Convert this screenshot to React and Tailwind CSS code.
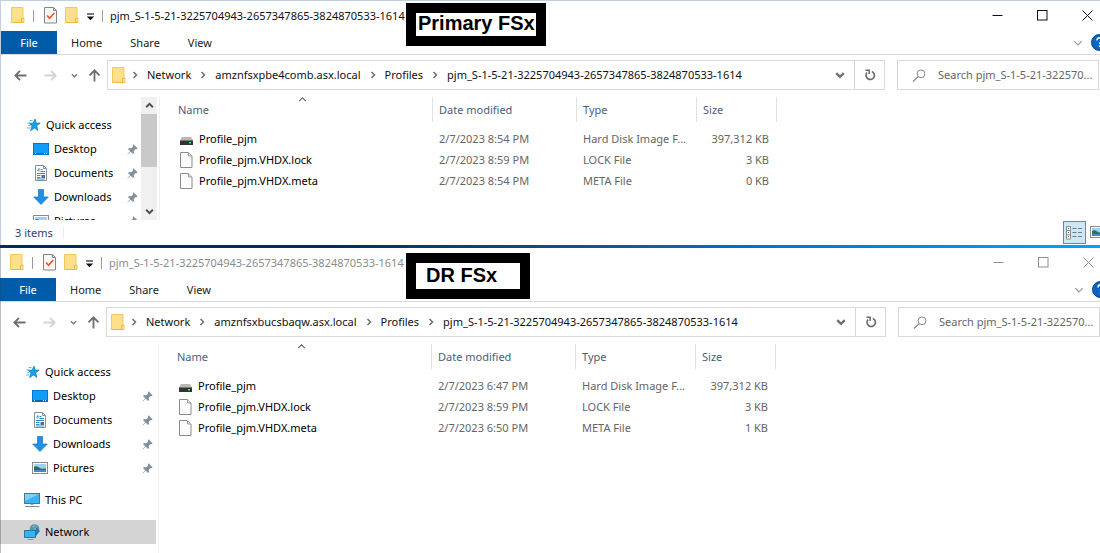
import React from "react";

const FolderIcon = () => (
  <svg width="14" height="17" viewBox="0 0 14 17" className="shrink-0" aria-hidden="true">
    <path d="M0.500 0.500h11.500v10.500h1v4.500h-12.500z" fill="#ffe08a" stroke="#f5c85c" />
    <path d="M10.500 15.500v-4h2M0.500 15.500h12.500" fill="none" stroke="#f0b945" />
  </svg>
);

const CheckDocIcon = () => (
  <svg width="13" height="17" viewBox="0 0 13 17" className="shrink-0" aria-hidden="true">
    <path d="M0.500 0.500h9l3 3v12.500h-12z" fill="#f6f6f6" stroke="#858585" />
    <path d="M9.500 0.500v3h3" fill="none" stroke="#858585" />
    <path d="M3 8.500l2.500 2.800l4.800-5.300" fill="none" stroke="#f0582c" strokeWidth="1.700" />
  </svg>
);

const FileIcon = () => (
  <svg width="13" height="16" viewBox="0 0 13 16" className="block shrink-0" aria-hidden="true">
    <path d="M0.500 0.500h8l3.500 3.500v11.500h-11.500z" fill="#fcfcfc" stroke="#8c8c8c" />
    <path d="M8.500 0.500v3.500h3.500" fill="#e6e6e6" stroke="#9a9a9a" />
  </svg>
);

const DiskIcon = () => (
  <svg width="13" height="16" viewBox="0 0 13 16" className="block shrink-0" aria-hidden="true">
    <path d="M2 6h9l2 3.500H0z" fill="#b9b9b9" />
    <rect x="0" y="9" width="13" height="5" fill="#333" />
    <rect x="0" y="9" width="13" height="1" fill="#777" />
    <rect x="9" y="11" width="2" height="1.500" fill="#3ee85c" />
  </svg>
);

const StarIcon = () => (
  <svg width="16" height="16" viewBox="0 0 16 16" className="shrink-0" aria-hidden="true">
    <path d="M10 2l1.200 4.100h4l-3.500 2.700l1.200 4.600l-3.400-2.400l-3.900 2.600l1.500-4.700l-3-2.600l4-0.200z" fill="#18a0e0" stroke="#1288cb" strokeWidth="0.800" />
    <path d="M4.500 3.500h3M2.500 6h2.500M3.500 8.500h2M2 11h3.500" stroke="#5cbdec" strokeWidth="1" />
  </svg>
);

const DesktopIcon = () => (
  <svg width="16" height="16" viewBox="0 0 16 16" className="shrink-0" aria-hidden="true">
    <rect x="0.500" y="2.500" width="15" height="11" fill="#109cf8" stroke="#0874c4" />
    <path d="M1 12.500h14" stroke="#0561a8" />
    <path d="M2 12.500h1M11 12.500h1M13 12.500h1" stroke="#fff" />
  </svg>
);

const DocumentsIcon = () => (
  <svg width="16" height="16" viewBox="0 0 16 16" className="shrink-0" aria-hidden="true">
    <path d="M2.500 0.500h8l3 3v12h-11z" fill="#fff" stroke="#85909a" />
    <path d="M10.500 0.500v3h3" fill="none" stroke="#85909a" />
    <path d="M4.500 5.500l1.500-2v3M7.500 4.500h2M7.500 6.500h4.500M4 8.500h8M4 10.500h3.500M4 12.500h3.500M4 14h8" fill="none" stroke="#2a8fd0" strokeWidth="1" />
    <rect x="8.500" y="10" width="3.500" height="3" fill="#5b6d7c" />
  </svg>
);

const DownloadsIcon = () => (
  <svg width="16" height="16" viewBox="0 0 16 16" className="shrink-0" aria-hidden="true">
    <path d="M5.500 0.500h5v7.500h4.800L8 15.500L0.700 8h4.800z" fill="#2090e2" stroke="#1673be" strokeWidth="0.700" />
  </svg>
);

const PicturesIcon = () => (
  <svg width="16" height="16" viewBox="0 0 16 16" className="shrink-0" aria-hidden="true">
    <rect x="0.500" y="2.500" width="15" height="11" fill="#fff" stroke="#8b8b8b" />
    <rect x="2" y="4" width="12" height="8" fill="#9cd0f5" />
    <path d="M2 7c3-2 5 1 7 1.500s3 0 5 0V12H2z" fill="#37685e" />
    <path d="M2 10h12V12H2z" fill="#3f8ac8" />
  </svg>
);

const PcIcon = () => (
  <svg width="16" height="16" viewBox="0 0 16 16" className="shrink-0" aria-hidden="true">
    <rect x="0.500" y="1.500" width="15" height="10" fill="#35b4f8" stroke="#58717f" />
    <path d="M1 2h14L1 9z" fill="#7bd0fc" />
    <path d="M6.500 12h3v1h-3z" fill="#9aa6ae" />
    <path d="M1 14.500h14.500" stroke="#7d8d98" />
  </svg>
);

const NetworkIcon = () => (
  <svg width="16" height="16" viewBox="0 0 16 16" className="shrink-0" aria-hidden="true">
    <circle cx="10.500" cy="5" r="4.800" fill="#5795ae" />
    <path d="M8.500 2.500c1.500 0.500 2 0 2.500-1M10.500 5c1-1 2-1 2.500-2.500" fill="none" stroke="#a5cfdc" />
    <path d="M12 3l4 4l-4 5z" fill="#2f7aa0" />
    <path d="M0.500 6.500h11v7h-11z" fill="#30b4f5" stroke="#39708c" />
    <path d="M3.500 15.500h6" stroke="#7d9aa8" />
  </svg>
);

const PinIcon = () => (
  <svg width="11" height="11" viewBox="0 0 11 11" className="ml-auto shrink-0" aria-hidden="true">
    <path d="M6.500 0.300l4.200 4.200l-1.200 0.700l-0.900-0.200l-1.800 1.900l0.200 2.100l-1 1l-2.200-2.200l-3.300 2.900l-0.200-0.200l2.900-3.300L1 5l1-1l2.100 0.200l1.900-1.800l-0.200-0.900z" fill="#84919b" />
  </svg>
);

const Chevron = ({ dir = "down", size = 8, color = "#6e6e6e", weight = 1.5 }) => {
  const d = { down: "M1 2.500L4 5.500L7 2.500", up: "M1 5.500L4 2.500L7 5.500", right: "M2.500 1L5.500 4L2.500 7" }[dir];
  return (
    <svg width={size} height={size} viewBox="0 0 8 8" className="shrink-0" aria-hidden="true">
      <path d={d} fill="none" stroke={color} strokeWidth={weight} />
    </svg>
  );
};

const ArrowIcon = ({ dir, color }) => (
  <svg width="13" height="13" viewBox="0 0 13 13" className="shrink-0" aria-hidden="true">
    <path
      d={{
        left: "M12.500 6.500H1.500M6 1.800L1.300 6.500L6 11.200",
        right: "M0.500 6.500H11.500M7 1.800L11.700 6.500L7 11.200",
        up: "M6.500 12.500V1.500M1.500 6.300L6.500 1.300L11.500 6.300",
      }[dir]}
      fill="none"
      stroke={color}
      strokeWidth="1.800"
    />
  </svg>
);

const RefreshIcon = () => (
  <svg width="12" height="12" viewBox="0 0 12 12" aria-hidden="true">
    <path d="M7.800 2.400A4.200 4.200 0 1 1 3 3.600" fill="none" stroke="#6a6a6a" strokeWidth="1.600" />
    <path d="M1.500 1.300H5.200V5" fill="none" stroke="#6a6a6a" strokeWidth="1.500" />
  </svg>
);

const SearchIcon = () => (
  <svg width="14" height="13" viewBox="0 0 14 13" className="shrink-0" aria-hidden="true">
    <circle cx="9" cy="4.800" r="3.900" fill="none" stroke="#8b8288" />
    <path d="M6.200 7.600L1 12.500" stroke="#8b8288" strokeWidth="1.200" />
  </svg>
);

const HelpIcon = () => (
  <svg width="17" height="17" viewBox="0 0 17 17" className="shrink-0" aria-hidden="true">
    <circle cx="8.500" cy="8.500" r="8" fill="#0a64c4" stroke="#08407f" />
    <path d="M6 6.500c0-3.500 5.200-3.500 5.200-0.500c0 2-2.600 1.800-2.600 4M8.600 11.500v1.600" fill="none" stroke="#fff" strokeWidth="1.500" />
  </svg>
);

const DetailsViewIcon = () => (
  <svg width="17" height="14" viewBox="0 0 17 14" aria-hidden="true">
    <path d="M0.500 0.500h4v12.500h-4zM0.500 4.500h4M0.500 8.800h4" fill="#fff" stroke="#8d8d8d" />
    <rect x="2" y="2" width="1" height="1" fill="#3078c0" />
    <rect x="2" y="6" width="1" height="1" fill="#3078c0" />
    <rect x="2" y="10" width="1" height="1" fill="#d03838" />
    <path d="M6.500 2.500h4M12 2.500h4M6.500 6.500h4M12 6.500h4M6.500 10.500h4M12 10.500h4" stroke="#6f7c84" />
  </svg>
);

const quickLinks = [
  { label: "Desktop", Icon: DesktopIcon },
  { label: "Documents", Icon: DocumentsIcon },
  { label: "Downloads", Icon: DownloadsIcon },
  { label: "Pictures", Icon: PicturesIcon },
];

const profileId = "pjm_S-1-5-21-3225704943-2657347865-3824870533-1614";

function TitleBar({ active }) {
  const stroke = active ? "#111" : "#8f8f8f";
  return (
    <header className="flex h-[30px] items-center pb-px">
      <div className="flex flex-1 items-center pl-2.5">
        <FolderIcon />
        <span className="ml-2 h-3 w-px bg-[#9a9a9a]" />
        <button type="button" aria-label="Properties" className="ml-2.5">
          <CheckDocIcon />
        </button>
        <button type="button" aria-label="New folder" className="ml-2">
          <FolderIcon />
        </button>
        <button type="button" aria-label="Customize Quick Access Toolbar" className="ml-[7px]">
          <svg width="9" height="8" viewBox="0 0 9 8" className="mt-0.5" aria-hidden="true">
            <path d="M1 1h7" stroke="#222" strokeWidth="1.200" />
            <path d="M0.800 3.500h7.400L4.500 7.200z" fill="#111" />
          </svg>
        </button>
        <span className="ml-[7px] h-3 w-px bg-[#9a9a9a]" />
        <h1 className={active ? "ml-[7px] text-[#111]" : "ml-[7px] text-[#8c8c8c]"}>{profileId}</h1>
      </div>
      <div className="-mr-2.5 flex">
        <button type="button" aria-label="Minimize" className="flex w-[45px] justify-center">
          <svg width="11" height="11" viewBox="0 0 11 11" aria-hidden="true"><path d="M0.500 5.500h10" stroke={stroke} /></svg>
        </button>
        <button type="button" aria-label="Maximize" className="flex w-[45px] justify-center">
          <svg width="11" height="11" viewBox="0 0 11 11" aria-hidden="true"><rect x="0.500" y="0.500" width="9.500" height="9.500" fill="none" stroke={stroke} /></svg>
        </button>
        <button type="button" aria-label="Close" className="flex w-[45px] justify-center">
          <svg width="11" height="11" viewBox="0 0 11 11" aria-hidden="true"><path d="M0.500 0.500l10 10M10.500 0.500l-10 10" stroke={stroke} /></svg>
        </button>
      </div>
    </header>
  );
}

function Ribbon() {
  return (
    <nav aria-label="Ribbon" className="flex h-6 items-stretch border-b border-[#dadada] text-[#222]">
      <button type="button" className="w-14 bg-[#005ba9] text-white">File</button>
      <div className="flex flex-1 gap-7 pl-3.5">
        <button type="button">Home</button>
        <button type="button">Share</button>
        <button type="button">View</button>
      </div>
      <div className="-mr-2 flex items-center gap-2">
        <button type="button" aria-label="Expand the Ribbon"><Chevron size={10} color="#999" weight={1} /></button>
        <button type="button" aria-label="Help"><HelpIcon /></button>
      </div>
    </nav>
  );
}

function AddressRow({ server, searchId }) {
  const crumbs = ["Network", server, "Profiles", profileId];
  return (
    <div className="flex items-center pt-[5px] pr-px">
      <div className="flex w-[106px] shrink-0 items-center pl-[13px]">
        <button type="button" aria-label="Back"><ArrowIcon dir="left" color="#6e6e6e" /></button>
        <button type="button" aria-label="Forward" className="ml-[17px]"><ArrowIcon dir="right" color="#d4d4d4" /></button>
        <button type="button" aria-label="Recent locations" className="ml-3.5"><Chevron size={7} color="#777" /></button>
        <button type="button" aria-label="Up" className="ml-2.5"><ArrowIcon dir="up" color="#6e6e6e" /></button>
      </div>
      <div className="flex h-[30px] min-w-0 flex-1 items-center border border-[#d9d9d9]">
        <div className="flex min-w-0 flex-1 items-center pl-1">
          <FolderIcon />
          <ol className="flex items-center text-[#111]">
            {crumbs.map((crumb) => (
              <li key={crumb} className="flex items-center">
                <span className="flex w-[18px] shrink-0 justify-center"><Chevron dir="right" /></span>
                <a href="#" className="mx-[3px] whitespace-nowrap">{crumb}</a>
              </li>
            ))}
          </ol>
        </div>
        <button type="button" aria-label="Previous locations" className="flex w-7 items-center justify-center"><Chevron size={10} weight={1.8} /></button>
        <button type="button" aria-label="Refresh" className="flex h-full w-[30px] items-center justify-center border-l border-[#d9d9d9]"><RefreshIcon /></button>
      </div>
      <label htmlFor={searchId} className="ml-3 flex h-[30px] w-[202px] shrink-0 items-center border border-[#d9d9d9] pl-3.5">
        <SearchIcon />
        <input
          id={searchId}
          type="text"
          aria-label="Search"
          placeholder="Search pjm_S-1-5-21-322570..."
          className="ml-3 min-w-0 flex-1 outline-none placeholder:text-[#666] placeholder:opacity-100"
        />
      </label>
    </div>
  );
}

function NavRow({ label, Icon, nested, pinned, selected, spaced }) {
  return (
    <li className={spaced ? "mt-2" : ""}>
      <a
        href="#"
        className={`flex h-6 items-center gap-[5px] pr-[3px] ${nested ? "pl-8" : "pl-6"} ${selected ? "bg-[#d4d4d4]" : ""}`}
      >
        <Icon />
        {label}
        {pinned && <PinIcon />}
      </a>
    </li>
  );
}

function NavPane({ scrolling }) {
  return (
    <div className="flex w-[159px] shrink-0 overflow-hidden border-r border-[#f0f0f0] pr-0.5">
      <ul className="min-w-0 flex-1 pt-4">
        <NavRow label="Quick access" Icon={StarIcon} />
        {quickLinks.map((link) => (
          <NavRow key={link.label} label={link.label} Icon={link.Icon} nested pinned />
        ))}
        {!scrolling && (
          <>
            <NavRow label="This PC" Icon={PcIcon} spaced />
            <NavRow label="Network" Icon={NetworkIcon} spaced selected />
          </>
        )}
      </ul>
      {scrolling && (
        <div className="flex w-4 flex-col bg-[#f0f0f0]">
          <button type="button" aria-label="Scroll up" className="flex h-[17px] items-center justify-center"><Chevron dir="up" size={9} color="#505050" weight={1.8} /></button>
          <div className="h-[53px] bg-[#c9c9c9]" />
          <button type="button" aria-label="Scroll down" className="mt-auto flex h-[17px] items-center justify-center"><Chevron size={9} color="#505050" weight={1.8} /></button>
        </div>
      )}
    </div>
  );
}

function FileTable({ files }) {
  return (
    <div className="min-w-0 flex-1">
      <table className="w-[617px] table-fixed border-collapse text-left">
        <colgroup>
          <col className="w-[273px]" />
          <col className="w-[144px]" />
          <col className="w-[120px]" />
          <col className="w-[80px]" />
        </colgroup>
        <thead className="text-[#4c607a]">
          <tr>
            {["Name", "Date modified", "Type", "Size"].map((name) => (
              <th key={name} scope="col" className="p-0 pb-1.5 font-normal">
                <div className={`relative flex h-[25px] items-center border-r border-[#e2e2e2] ${name === "Name" ? "pl-[18px]" : "pl-1.5"}`}>
                  {name}
                  {name === "Name" && (
                    <span className="absolute -top-0.5 left-[138px] flex"><Chevron dir="up" size={9} color="#666" weight={1} /></span>
                  )}
                </div>
              </th>
            ))}
          </tr>
        </thead>
        <tbody className="text-[#666]">
          {files.map(([name, date, type, size]) => (
            <tr key={name} className="h-[21px]">
              <td className="p-0 pl-5 text-[#000]">
                <span className="flex items-center gap-1.5">
                  {name.includes(".") ? <FileIcon /> : <DiskIcon />}
                  {name}
                </span>
              </td>
              <td className="p-0 pl-1.5">{date}</td>
              <td className="p-0 pl-1.5 whitespace-nowrap">{type}</td>
              <td className="p-0 pr-2 text-right">{size}</td>
            </tr>
          ))}
        </tbody>
      </table>
    </div>
  );
}

function StatusBar() {
  return (
    <footer className="flex h-[25px] items-center text-[#2b4566]">
      <span className="ml-3.5">3 items</span>
      <span className="ml-2.5 h-3 w-px bg-[#ececec]" />
      <div className="-mr-1.5 ml-auto flex items-center gap-1">
        <button type="button" aria-label="Details view" className="flex h-[23px] w-[23px] items-center justify-center border border-[#26a0da] bg-[#cce8f5]"><DetailsViewIcon /></button>
        <button type="button" aria-label="Large icons view" className="pb-0.5"><PicturesIcon /></button>
      </div>
    </footer>
  );
}

export default function App() {
  return (
    <main className="flex min-h-screen flex-col overflow-hidden bg-white font-['Noto_Sans','Open_Sans',sans-serif] text-[11px] leading-4 text-[#000]">
      <section aria-label="Primary FSx" className="relative overflow-hidden border-t border-l border-[#c0cedd]">
        <TitleBar active />
        <Ribbon />
        <AddressRow server="amznfsxpbe4comb.asx.local" searchId="search-primary" />
        <div className="mt-[7px] flex h-[123px]">
          <NavPane scrolling />
          <FileTable
            files={[
              ["Profile_pjm", "2/7/2023 8:54 PM", "Hard Disk Image F...", "397,312 KB"],
              ["Profile_pjm.VHDX.lock", "2/7/2023 8:59 PM", "LOCK File", "3 KB"],
              ["Profile_pjm.VHDX.meta", "2/7/2023 8:54 PM", "META File", "0 KB"],
            ]}
          />
        </div>
        <StatusBar />
        <div className="absolute top-0.5 left-[405px] flex h-[43px] w-[140px] items-center border-10 border-black bg-white pb-[3px] pl-0.5 font-['Liberation_Sans',sans-serif] text-xl leading-5 font-bold whitespace-nowrap">
          Primary FSx
        </div>
      </section>
      <div className="h-[3px] bg-linear-to-r from-[#0b2a52] from-30% via-[#0074d0] via-70% to-[#00a4f8]" />
      <section aria-label="DR FSx" className="relative flex flex-1 flex-col overflow-hidden">
        <div className="-mr-px flex flex-1 flex-col">
          <TitleBar />
          <Ribbon />
          <AddressRow server="amznfsxbucsbaqw.asx.local" searchId="search-dr" />
          <div className="mt-[7px] flex flex-1">
            <NavPane />
            <FileTable
              files={[
                ["Profile_pjm", "2/7/2023 6:47 PM", "Hard Disk Image F...", "397,312 KB"],
                ["Profile_pjm.VHDX.lock", "2/7/2023 8:59 PM", "LOCK File", "3 KB"],
                ["Profile_pjm.VHDX.meta", "2/7/2023 6:50 PM", "META File", "1 KB"],
              ]}
            />
          </div>
        </div>
        <div className="absolute inset-y-0 left-0 w-px bg-[#33415555]" />
        <div className="absolute top-[5px] left-[406px] flex h-[46px] w-[124px] items-center border-10 border-black bg-white pb-[3px] pl-2.5 font-['Liberation_Sans',sans-serif] text-xl leading-5 font-bold whitespace-nowrap">
          DR FSx
        </div>
      </section>
    </main>
  );
}
